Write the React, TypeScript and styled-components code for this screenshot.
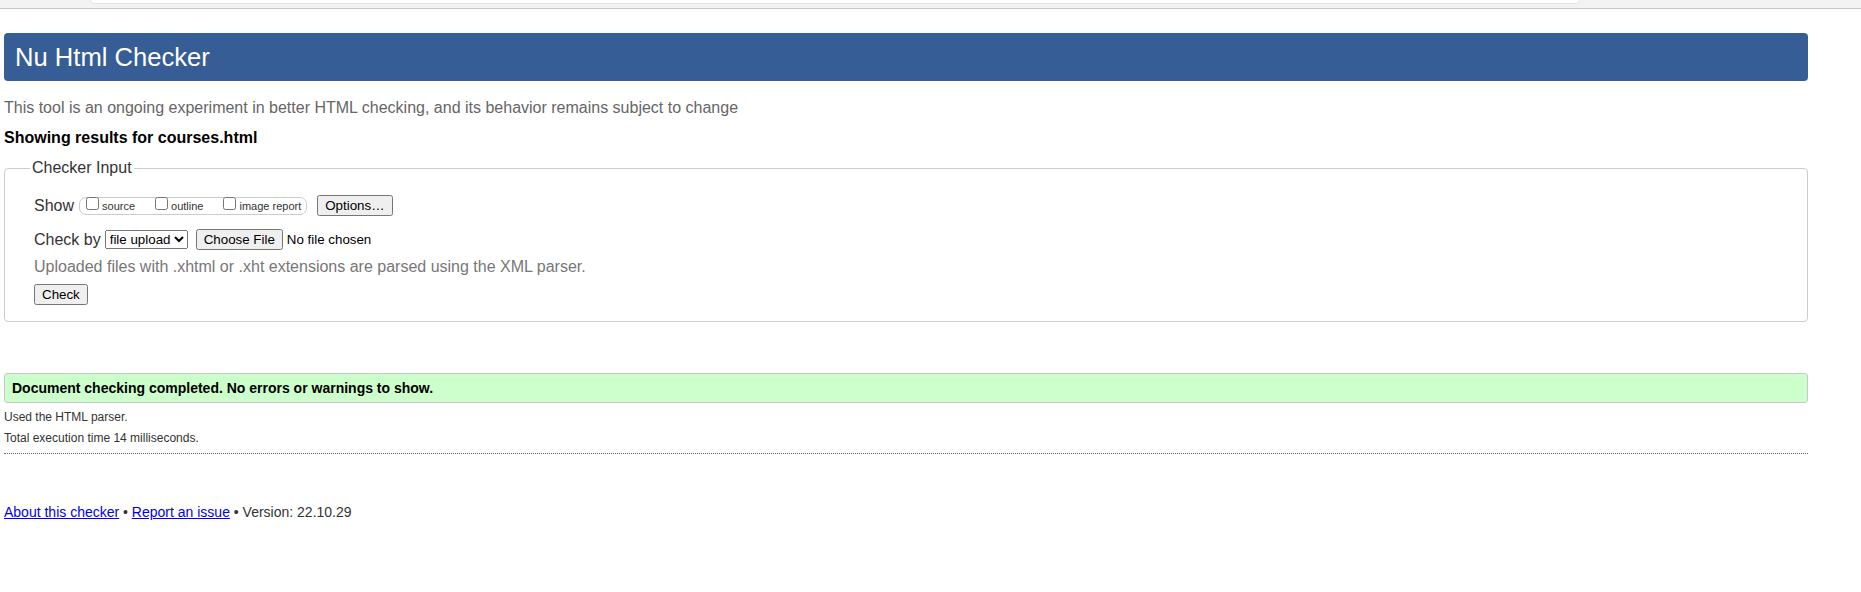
import React from 'react';
import styled, { createGlobalStyle } from 'styled-components';

const GlobalStyle = createGlobalStyle`
  html, body { margin: 0; padding: 0; background: #fff; }
  body { font-family: "Liberation Sans", Arial, sans-serif; color: #333; }
`;

const BrowserEdge = styled.div`
  height: 9px;
  background: #f3f3f3;
  border-bottom: 1px solid #c6c6c6;
  box-sizing: border-box;
  display: flex;
  padding: 0 281px 0 90px;
`;

const AddressStub = styled.div`
  flex: 1;
  height: 4px;
  background: #fff;
  border: 1px solid #e4e4e4;
  border-top: none;
  border-radius: 0 0 4px 4px;
  box-sizing: border-box;
`;

const Page = styled.main`
  width: 1804px;
  margin-left: 4px;
  display: flex;
  flex-direction: column;
`;

const Banner = styled.h1`
  margin: 24px 0 0;
  height: 48px;
  background: #365d95;
  border-radius: 4px;
  color: #fff;
  font-size: 25.6px;
  font-weight: normal;
  padding-left: 11px;
  display: flex;
  align-items: center;
`;

const Text = styled.p<{ $size?: number; $color?: string; $top: number; $bold?: boolean }>`
  margin: ${(p) => p.$top}px 0 0;
  font-size: ${(p) => p.$size ?? 16}px;
  line-height: ${(p) => Math.round((p.$size ?? 16) * 1.15)}px;
  color: ${(p) => p.$color ?? '#333'};
  font-weight: ${(p) => (p.$bold ? 'bold' : 'normal')};
`;

const Fieldset = styled.fieldset`
  margin: 12px 0 0;
  border: 1px solid #ccc;
  border-radius: 4px;
  padding: 0 0 16px 29px;
  min-width: 0;
`;

const Legend = styled.legend`
  font-size: 16px;
  line-height: 18px;
  color: #333;
  padding: 0 2px;
  margin-left: -4px;
`;

const Stack = styled.div`
  display: flex;
  flex-direction: column;
  align-items: flex-start;
  padding-top: 18px;
`;

const Row = styled.div<{ $top?: number }>`
  display: flex;
  align-items: center;
  margin-top: ${(p) => p.$top ?? 0}px;
  height: 21px;
`;

const RowLabel = styled.span`
  font-size: 16px;
  line-height: 18px;
  color: #333;
`;

const CheckGroup = styled.div`
  display: flex;
  align-items: flex-start;
  gap: 16px;
  height: 18px;
  box-sizing: border-box;
  border: 1px solid #ccc;
  border-radius: 7px;
  padding: 0 5px 0 2px;
  margin-left: 5px;
`;

const CheckItem = styled.label`
  display: flex;
  align-items: flex-start;
`;

const Box = styled.input`
  width: 13px;
  height: 13px;
  margin: -1px 3px 0 4px;
`;

const SmallText = styled.span`
  font-size: 11px;
  line-height: 13px;
  margin-top: 2px;
  color: #333;
`;

const Button = styled.button<{ $left?: number; $top?: number }>`
  font-family: "Liberation Sans", Arial, sans-serif;
  font-size: 13.333px;
  padding: 1px 6px;
  margin-left: ${(p) => p.$left ?? 0}px;
  margin-top: ${(p) => p.$top ?? 0}px;
  height: 21px;
  color: #000;
`;

const Select = styled.select`
  font-family: "Liberation Sans", Arial, sans-serif;
  font-size: 13.333px;
  margin-left: 4px;
  height: 19px;
  color: #000;
`;

const FileInput = styled.input`
  font-family: "Liberation Sans", Arial, sans-serif;
  font-size: 13.333px;
  margin-left: 8px;
  color: #000;
`;

const Hint = styled.p`
  margin: 8px 0 0;
  font-size: 16px;
  line-height: 18px;
  color: #777;
`;

const StatusBox = styled.div`
  margin-top: 51px;
  height: 30px;
  box-sizing: border-box;
  background: #ccffcc;
  border: 1px solid #c8c8c8;
  border-radius: 3px;
  padding-left: 7px;
  display: flex;
  align-items: center;
  font-size: 14px;
  font-weight: bold;
  color: #000;
`;

const Divider = styled.hr`
  margin: 8px 0 0;
  border: none;
  border-top: 1px dotted #666;
  height: 0;
`;

const Footer = styled.p`
  margin: 50px 0 0;
  font-size: 14px;
  line-height: 16px;
  color: #333;
`;

const Link = styled.a`
  color: #0000ee;
  text-decoration: underline;
`;

export default function App() {
  return (
    <>
      <GlobalStyle />
      <BrowserEdge>
        <AddressStub />
      </BrowserEdge>
      <Page>
        <Banner>Nu Html Checker</Banner>
        <Text $top={18} $color="#666">
          This tool is an ongoing experiment in better HTML checking, and its behavior remains subject to change
        </Text>
        <Text $top={12} $bold $color="#000">
          Showing results for courses.html
        </Text>
        <Fieldset>
          <Legend>Checker Input</Legend>
          <Stack>
            <Row>
              <RowLabel>Show</RowLabel>
              <CheckGroup>
                <CheckItem>
                  <Box type="checkbox" />
                  <SmallText>source</SmallText>
                </CheckItem>
                <CheckItem>
                  <Box type="checkbox" />
                  <SmallText>outline</SmallText>
                </CheckItem>
                <CheckItem>
                  <Box type="checkbox" />
                  <SmallText>image report</SmallText>
                </CheckItem>
              </CheckGroup>
              <Button type="button" $left={10}>Options…</Button>
            </Row>
            <Row $top={13}>
              <RowLabel>Check by</RowLabel>
              <Select defaultValue="file">
                <option value="address">address</option>
                <option value="file">file upload</option>
                <option value="text">text input</option>
              </Select>
              <FileInput type="file" />
            </Row>
            <Hint>Uploaded files with .xhtml or .xht extensions are parsed using the XML parser.</Hint>
            <Button type="button" $top={8}>Check</Button>
          </Stack>
        </Fieldset>
        <StatusBox>Document checking completed. No errors or warnings to show.</StatusBox>
        <Text $top={7} $size={12}>Used the HTML parser.</Text>
        <Text $top={7} $size={12}>Total execution time 14 milliseconds.</Text>
        <Divider />
        <Footer>
          <Link href="#about">About this checker</Link> • <Link href="#issue">Report an issue</Link> • Version: 22.10.29
        </Footer>
      </Page>
    </>
  );
}
